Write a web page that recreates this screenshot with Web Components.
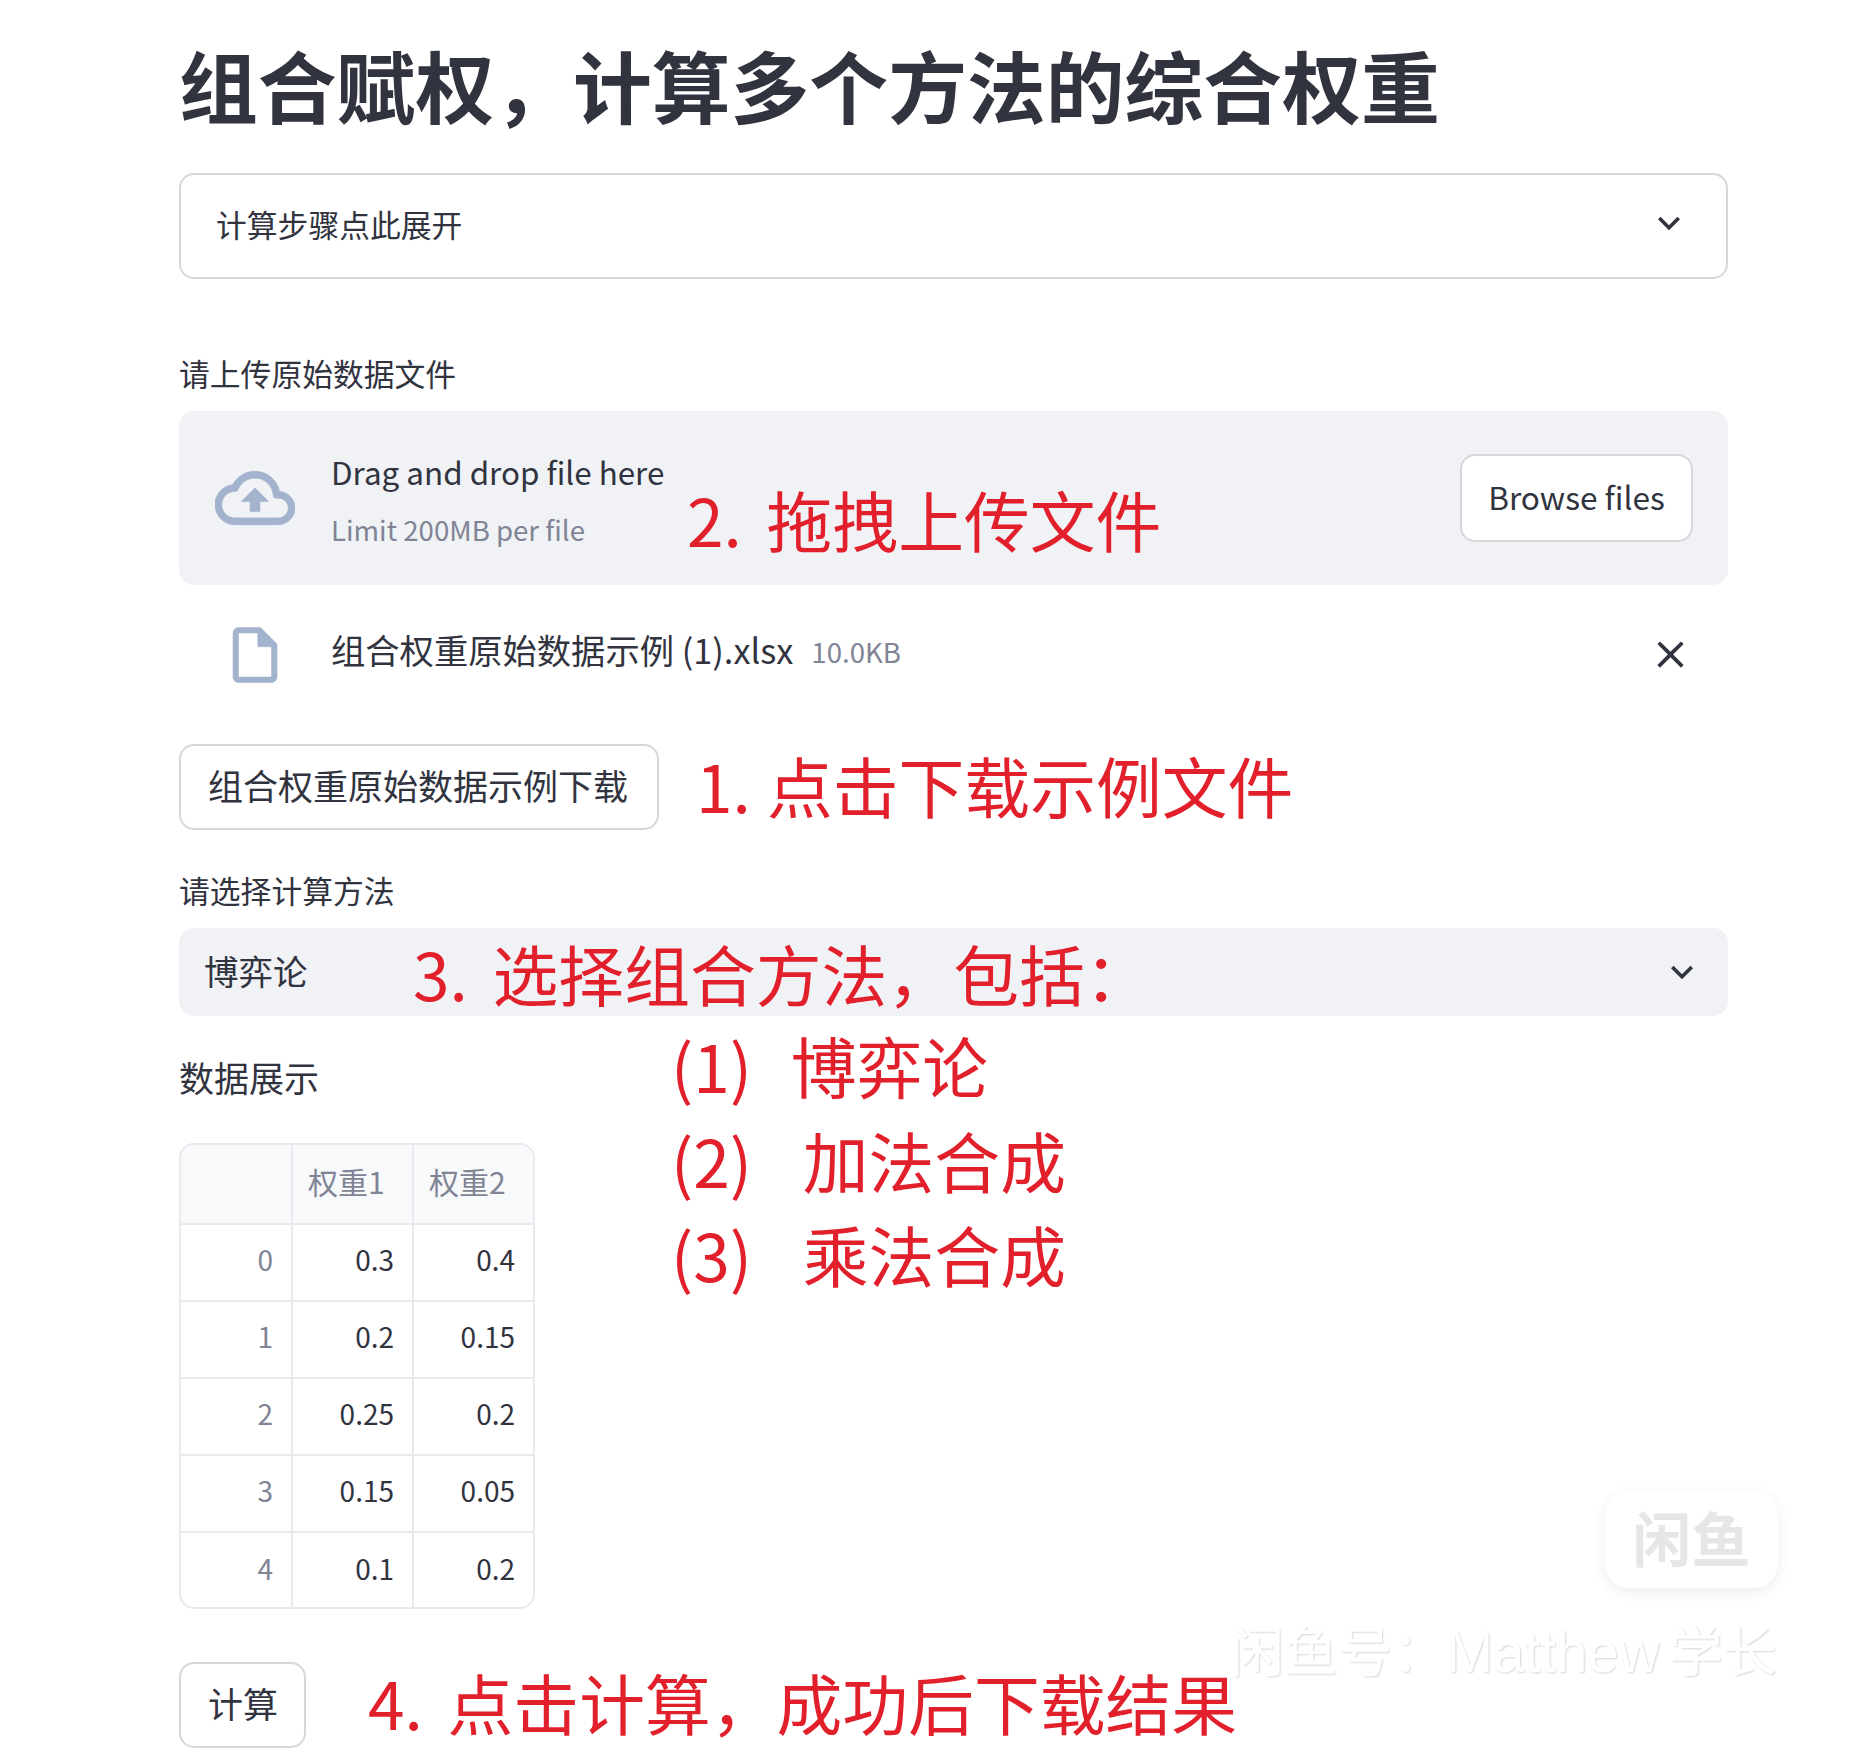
<!DOCTYPE html>
<html lang="zh">
<head>
<meta charset="utf-8">
<title>组合赋权</title>
<style>
  html, body { margin: 0; background: #fff; }
  body { font-family: "Noto Sans CJK SC", "Noto Sans", sans-serif; color: #31333f; }
</style>
</head>
<body>
<app-page>
  <app-title>组合赋权，计算多个方法的综合权重</app-title>
  <app-expander>计算步骤点此展开</app-expander>
  <app-label style="margin-top:76px">请上传原始数据文件</app-label>
  <app-uploader></app-uploader>
  <app-file-row name="组合权重原始数据示例 (1).xlsx" size="10.0KB"></app-file-row>
  <app-button style="margin-top:54px">组合权重原始数据示例下载</app-button>
  <app-label style="margin-top:42px">请选择计算方法</app-label>
  <app-select>博弈论</app-select>
  <app-label big style="margin-top:43px">数据展示</app-label>
  <app-table style="margin-top:44px"></app-table>
  <app-button style="margin-top:53px;padding-right:26px">计算</app-button>

  <app-note slot="over" x="687" y="474">2. 拖拽上传文件</app-note>
  <app-note slot="over" x="696" y="740" style="word-spacing:1.4px">1. 点击下载示例文件</app-note>
  <app-note slot="over" x="413" y="928">3. 选择组合方法，包括：</app-note>
  <app-note slot="over" x="671" y="1020" style="word-spacing:24px">(1) 博弈论</app-note>
  <app-note slot="over" x="671" y="1115" style="word-spacing:36px">(2) 加法合成</app-note>
  <app-note slot="over" x="671" y="1209" style="word-spacing:36px">(3) 乘法合成</app-note>
  <app-note slot="over" x="368" y="1657">4. 点击计算，成功后下载结果</app-note>
  <app-watermark slot="over"></app-watermark>
</app-page>

<script>
const CHEVRON = 'M7.41 8.59L12 13.17l4.59-4.58L18 10l-6 6-6-6 1.41-1.41z';

class AppPage extends HTMLElement {
  constructor() {
    super();
    this.attachShadow({ mode: 'open' });
    this.shadowRoot.innerHTML = `
      <style>
        :host { display: block; position: relative; width: 1874px; height: 1760px; overflow: hidden; }
        main { display: flex; flex-direction: column; width: 1549px; padding: 30px 0 0 179px; }
      </style>
      <main><slot></slot></main>
      <slot name="over"></slot>`;
  }
}

class AppTitle extends HTMLElement {
  constructor() {
    super();
    this.attachShadow({ mode: 'open' });
    this.shadowRoot.innerHTML = `
      <style>
        :host { display: block; height: 113px; margin-bottom: 30px; font-size: 78.8px; line-height: 109px; font-weight: 700; color: #31333f; white-space: nowrap; }
      </style>
      <slot></slot>`;
  }
}

class AppExpander extends HTMLElement {
  constructor() {
    super();
    this.attachShadow({ mode: 'open' });
    this.shadowRoot.innerHTML = `
      <style>
        :host { display: flex; align-items: center; justify-content: space-between; box-sizing: border-box; height: 106px; padding: 0 35px; border: 2px solid #d6d7db; border-radius: 15px; font-size: 30.8px; }
        span { margin-top: -5px; }
        svg { width: 44px; height: 44px; fill: #31333f; margin-top: -6px; }
      </style>
      <span><slot></slot></span>
      <svg viewBox="0 0 24 24"><path d="${CHEVRON}"/></svg>`;
  }
}

class AppLabel extends HTMLElement {
  constructor() {
    super();
    this.attachShadow({ mode: 'open' });
    this.shadowRoot.innerHTML = `
      <style>
        :host { display: block; height: 40px; line-height: 36px; margin-bottom: 16px; font-size: 30.8px; }
        :host([big]) { font-size: 35px; margin-bottom: 0; }
      </style>
      <slot></slot>`;
  }
}

class AppUploader extends HTMLElement {
  constructor() {
    super();
    this.attachShadow({ mode: 'open' });
    this.shadowRoot.innerHTML = `
      <style>
        :host { display: flex; align-items: center; box-sizing: border-box; height: 174px; padding: 0 35px 0 36px; border-radius: 15px; background: #f0f2f6; }
        svg { flex: none; width: 80px; height: 80px; fill: #a3b2cd; stroke: #a3b2cd; stroke-width: .25; }
        .text { flex: 1; margin-left: 36px; display: flex; flex-direction: column; gap: 16.5px; margin-top: 3px; }
        .drag { font-size: 31.4px; line-height: 42px; }
        .limit { font-size: 27.6px; line-height: 38px; color: #808495; }
        button { box-sizing: border-box; width: 233px; height: 88px; border: 2px solid #d6d7db; border-radius: 15px; background: #fff; color: #31333f; font: inherit; font-size: 31.6px; padding: 0 0 5px; }
      </style>
      <svg viewBox="0 0 24 24"><path d="M19.35 10.04C18.67 6.59 15.64 4 12 4 9.11 4 6.6 5.64 5.35 8.04 2.34 8.36 0 10.91 0 14c0 3.31 2.69 6 6 6h13c2.76 0 5-2.24 5-5 0-2.64-2.05-4.78-4.65-4.96zM19 18H6c-2.21 0-4-1.79-4-4 0-2.05 1.53-3.76 3.56-3.97l1.07-.11.5-.95C8.08 7.14 9.94 6 12 6c2.62 0 4.88 1.86 5.39 4.43l.3 1.5 1.53.11c1.56.1 2.78 1.41 2.78 2.96 0 1.65-1.35 3-3 3zM8 13h2.55v3h2.9v-3H16l-4-4z"/></svg>
      <div class="text">
        <span class="drag">Drag and drop file here</span>
        <span class="limit">Limit 200MB per file</span>
      </div>
      <button>Browse files</button>`;
  }
}

class AppFileRow extends HTMLElement {
  constructor() {
    super();
    this.attachShadow({ mode: 'open' });
    this.shadowRoot.innerHTML = `
      <style>
        :host { display: flex; align-items: center; height: 70px; margin-top: 35px; padding: 0 35px 0 43px; }
        .doc { flex: none; width: 66px; height: 66px; fill: #a3b2cd; stroke: #a3b2cd; stroke-width: .2; }
        .name { margin-left: 43px; font-size: 34.3px; margin-top: -12px; }
        .size { margin-left: 18px; font-size: 27.6px; color: #808495; flex: 1; margin-top: -8px; }
        .x { flex: none; width: 45px; height: 45px; fill: #31333f; margin-top: -2px; }
      </style>
      <svg class="doc" viewBox="0 0 24 24"><path d="M14 2H6c-1.1 0-1.99.9-1.99 2L4 20c0 1.1.89 2 1.99 2H18c1.1 0 2-.9 2-2V8l-6-6zM6 20V4h7v5h5v11H6z"/></svg>
      <span class="name">${this.getAttribute('name')}</span>
      <span class="size">${this.getAttribute('size')}</span>
      <svg class="x" viewBox="0 0 24 24"><path d="M19 6.41L17.59 5 12 10.59 6.41 5 5 6.41 10.59 12 5 17.59 6.41 19 12 13.41 17.59 19 19 17.59 13.41 12 19 6.41z"/></svg>`;
  }
}

class AppButton extends HTMLElement {
  constructor() {
    super();
    this.attachShadow({ mode: 'open' });
    this.shadowRoot.innerHTML = `
      <style>
        :host { display: flex; align-items: center; align-self: flex-start; box-sizing: border-box; height: 86px; padding: 0 29px 6px 27px; border: 2px solid #d6d7db; border-radius: 15px; font-size: 35px; white-space: nowrap; }
      </style>
      <slot></slot>`;
  }
}

class AppSelect extends HTMLElement {
  constructor() {
    super();
    this.attachShadow({ mode: 'open' });
    this.shadowRoot.innerHTML = `
      <style>
        :host { display: flex; align-items: center; justify-content: space-between; box-sizing: border-box; height: 88px; padding: 0 24px 0 25px; border-radius: 15px; background: #f0f2f6; font-size: 34.5px; }
        span { margin-top: -5px; }
        svg { width: 44px; height: 44px; fill: #31333f; }
      </style>
      <span><slot></slot></span>
      <svg viewBox="0 0 24 24"><path d="${CHEVRON}"/></svg>`;
  }
}

class AppTable extends HTMLElement {
  constructor() {
    super();
    this.attachShadow({ mode: 'open' });
    const rows = [['0', '0.3', '0.4'], ['1', '0.2', '0.15'], ['2', '0.25', '0.2'], ['3', '0.15', '0.05'], ['4', '0.1', '0.2']];
    this.shadowRoot.innerHTML = `
      <style>
        :host { display: block; width: 356px; font-size: 28px; }
        .wrap { box-sizing: border-box; height: 466px; border: 2px solid #e8eaee; border-radius: 15px; overflow: hidden; }
        .row { display: grid; grid-template-columns: 110px 121px 121px; height: 77px; border-top: 2px solid #e8eaee; box-sizing: border-box; }
        .row:first-child { height: 78px; border-top: 0; background: #f8f9fb; color: #808495; font-size: 30px; }
        .row:last-child { height: 78px; }
        .row > div { display: flex; align-items: center; justify-content: flex-end; padding: 0 18px 7px 0; border-left: 2px solid #e8eaee; }
        .row > div:first-child { border-left: 0; color: #808495; padding-right: 18px; }
        .row:first-child > div { justify-content: flex-start; padding: 0 0 6px 15px; }
      </style>
      <div class="wrap">
        <div class="row"><div></div><div>权重1</div><div>权重2</div></div>
        ${rows.map(r => `<div class="row">${r.map(c => `<div>${c}</div>`).join('')}</div>`).join('')}
      </div>`;
  }
}

// red hand annotations laid over the screenshot
class AppNote extends HTMLElement {
  constructor() {
    super();
    this.attachShadow({ mode: 'open' });
    this.shadowRoot.innerHTML = `
      <style>
        :host { position: absolute; left: ${this.getAttribute('x')}px; top: ${this.getAttribute('y')}px; color: #e2202b; font-size: 65.8px; line-height: 90px; white-space: nowrap; word-spacing: 10px; }
      </style>
      <slot></slot>`;
  }
}

class AppWatermark extends HTMLElement {
  constructor() {
    super();
    this.attachShadow({ mode: 'open' });
    this.shadowRoot.innerHTML = `
      <style>
        :host { position: absolute; left: 1230px; top: 1491px; width: 548px; height: 200px; }
        .logo { position: absolute; right: 0; top: 0; box-sizing: border-box; width: 173px; height: 97px; padding-bottom: 6px; border-radius: 24px; background: #fff; box-shadow: 0 4px 14px rgba(0,0,0,.07); display: flex; align-items: center; justify-content: center; color: #e6e6e6; font-size: 59px; font-weight: 700; line-height: 1; }
        .mark { position: absolute; left: 0; top: 120px; color: #fff; font-size: 54px; line-height: 76px; white-space: nowrap; word-spacing: -3px; text-shadow: 1px 1px 2px rgba(0,0,0,.16); }
        .latin { font-family: "Liberation Sans", sans-serif; font-size: 56.5px; }
      </style>
      <div class="logo">闲鱼</div>
      <div class="mark">闲鱼号：<span class="latin">Matthew</span> 学长</div>`;
  }
}

customElements.define('app-page', AppPage);
customElements.define('app-title', AppTitle);
customElements.define('app-expander', AppExpander);
customElements.define('app-label', AppLabel);
customElements.define('app-uploader', AppUploader);
customElements.define('app-file-row', AppFileRow);
customElements.define('app-button', AppButton);
customElements.define('app-select', AppSelect);
customElements.define('app-table', AppTable);
customElements.define('app-note', AppNote);
customElements.define('app-watermark', AppWatermark);
</script>
</body>
</html>
